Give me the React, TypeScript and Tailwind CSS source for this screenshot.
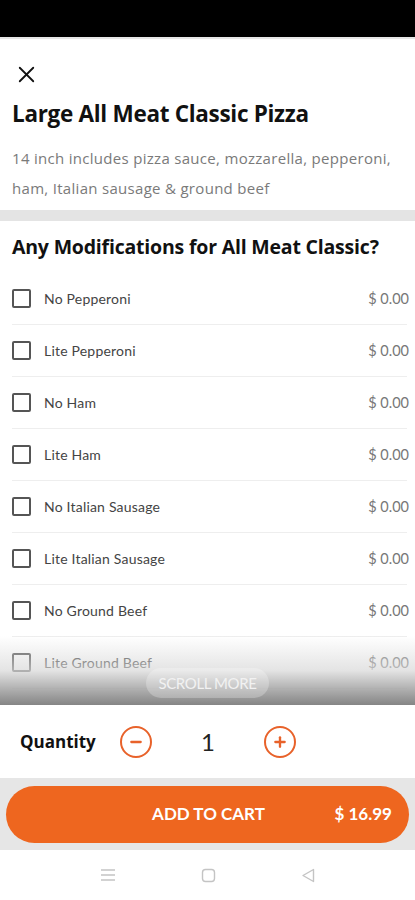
import { Minus, Plus, X } from 'lucide-react';

const mods = [
  'No Pepperoni',
  'Lite Pepperoni',
  'No Ham',
  'Lite Ham',
  'No Italian Sausage',
  'Lite Italian Sausage',
  'No Ground Beef',
  'Lite Ground Beef',
  'No Anchovies',
];

export default function App() {
  return (
    <div className="flex h-[900px] w-[415px] flex-col overflow-hidden bg-white font-['Lato',sans-serif]">
      <div className="h-[37px] shrink-0 bg-black" />
      <div className="h-[2px] shrink-0 bg-[#e6e6e6]" />

      <div className="relative min-h-0 flex-1 overflow-hidden">
        <div className="flex h-[49px] items-end pl-[13px]">
          <X className="h-[27px] w-[27px] text-[#111]" strokeWidth={1.6} />
        </div>
        <h1 className="mt-[13px] px-3 font-['Open_Sans',sans-serif] text-[22.5px] font-bold leading-[26px] tracking-[-0.3px] text-[#111]">
          Large All Meat Classic Pizza
        </h1>
        <p className="mt-[16px] px-3 font-['Open_Sans',sans-serif] text-[15px] leading-[30px] tracking-[0.3px] text-[#7a7a7a]">
          14 inch includes pizza sauce, mozzarella, pepperoni, ham, Italian sausage &amp; ground beef
        </p>
        <div className="mt-[7px] h-[11px] bg-[#e4e4e4]" />
        <h2 className="flex h-[52px] items-center px-3 font-['Open_Sans',sans-serif] text-[19.5px] font-bold tracking-[-0.2px] text-[#111]">
          Any Modifications for All Meat Classic?
        </h2>
        <ul>
          {mods.map((m) => (
            <li key={m} className="ml-3 mr-[8px] flex h-[52px] items-center border-b border-[#eeeeee]">
              <span className="h-[19px] w-[19px] shrink-0 rounded-[2px] border-2 border-[#555]" />
              <span className="ml-[13px] flex-1 text-[14px] tracking-[0.2px] text-[#444]">{m}</span>
              <span className="-mr-[2px] text-[14.5px] text-[#777]">$ 0.00</span>
            </li>
          ))}
        </ul>

        <div className="pointer-events-none absolute inset-x-0 bottom-0 flex h-[69px] items-end justify-center bg-gradient-to-b from-white/0 via-[#d8d8d8]/70 to-[#858585] pb-[7px]">
          <span className="rounded-full bg-white/25 px-[12px] py-[4px] text-[15px] tracking-tight text-[#f2f2f2]">
            SCROLL MORE
          </span>
        </div>
      </div>

      <div className="flex h-[73px] shrink-0 items-center bg-white pl-5">
        <span className="w-[100px] font-['Open_Sans',sans-serif] text-[17px] font-bold text-[#111]">Quantity</span>
        <span className="flex h-[32px] w-[32px] items-center justify-center rounded-full border-[2.5px] border-[#e8622a]">
          <Minus className="h-[16px] w-[16px] text-[#e8622a]" strokeWidth={3.5} />
        </span>
        <span className="w-[112px] text-center text-[24px] text-[#222]">1</span>
        <span className="flex h-[32px] w-[32px] items-center justify-center rounded-full border-[2.5px] border-[#e8622a]">
          <Plus className="h-[16px] w-[16px] text-[#e8622a]" strokeWidth={3.5} />
        </span>
      </div>

      <div className="flex h-[72px] shrink-0 items-center bg-[#e6e6e6] px-[6px]">
        <button
          type="button"
          className="relative flex h-[57px] w-full items-center justify-center rounded-full bg-[#ee661f] text-white"
        >
          <span className="ml-[2px] text-[17px] font-bold">ADD TO CART</span>
          <span className="absolute right-[17px] text-[17px] font-bold">$ 16.99</span>
        </button>
      </div>

      <div className="flex h-[50px] shrink-0 items-center justify-around bg-white px-[58px]">
        <svg width="16" height="14" viewBox="0 0 16 14" fill="none" stroke="#c4c4c4" strokeWidth="1.4">
          <path d="M1 2h14M1 7h14M1 12h14" />
        </svg>
        <svg width="15" height="15" viewBox="0 0 15 15" fill="none" stroke="#c4c4c4" strokeWidth="1.4">
          <rect x="1.5" y="1.5" width="12" height="12" rx="3" />
        </svg>
        <svg width="14" height="15" viewBox="0 0 14 15" fill="none" stroke="#c4c4c4" strokeWidth="1.4">
          <path d="M12.5 1.5v12L2 7.5z" strokeLinejoin="round" />
        </svg>
      </div>
    </div>
  );
}
